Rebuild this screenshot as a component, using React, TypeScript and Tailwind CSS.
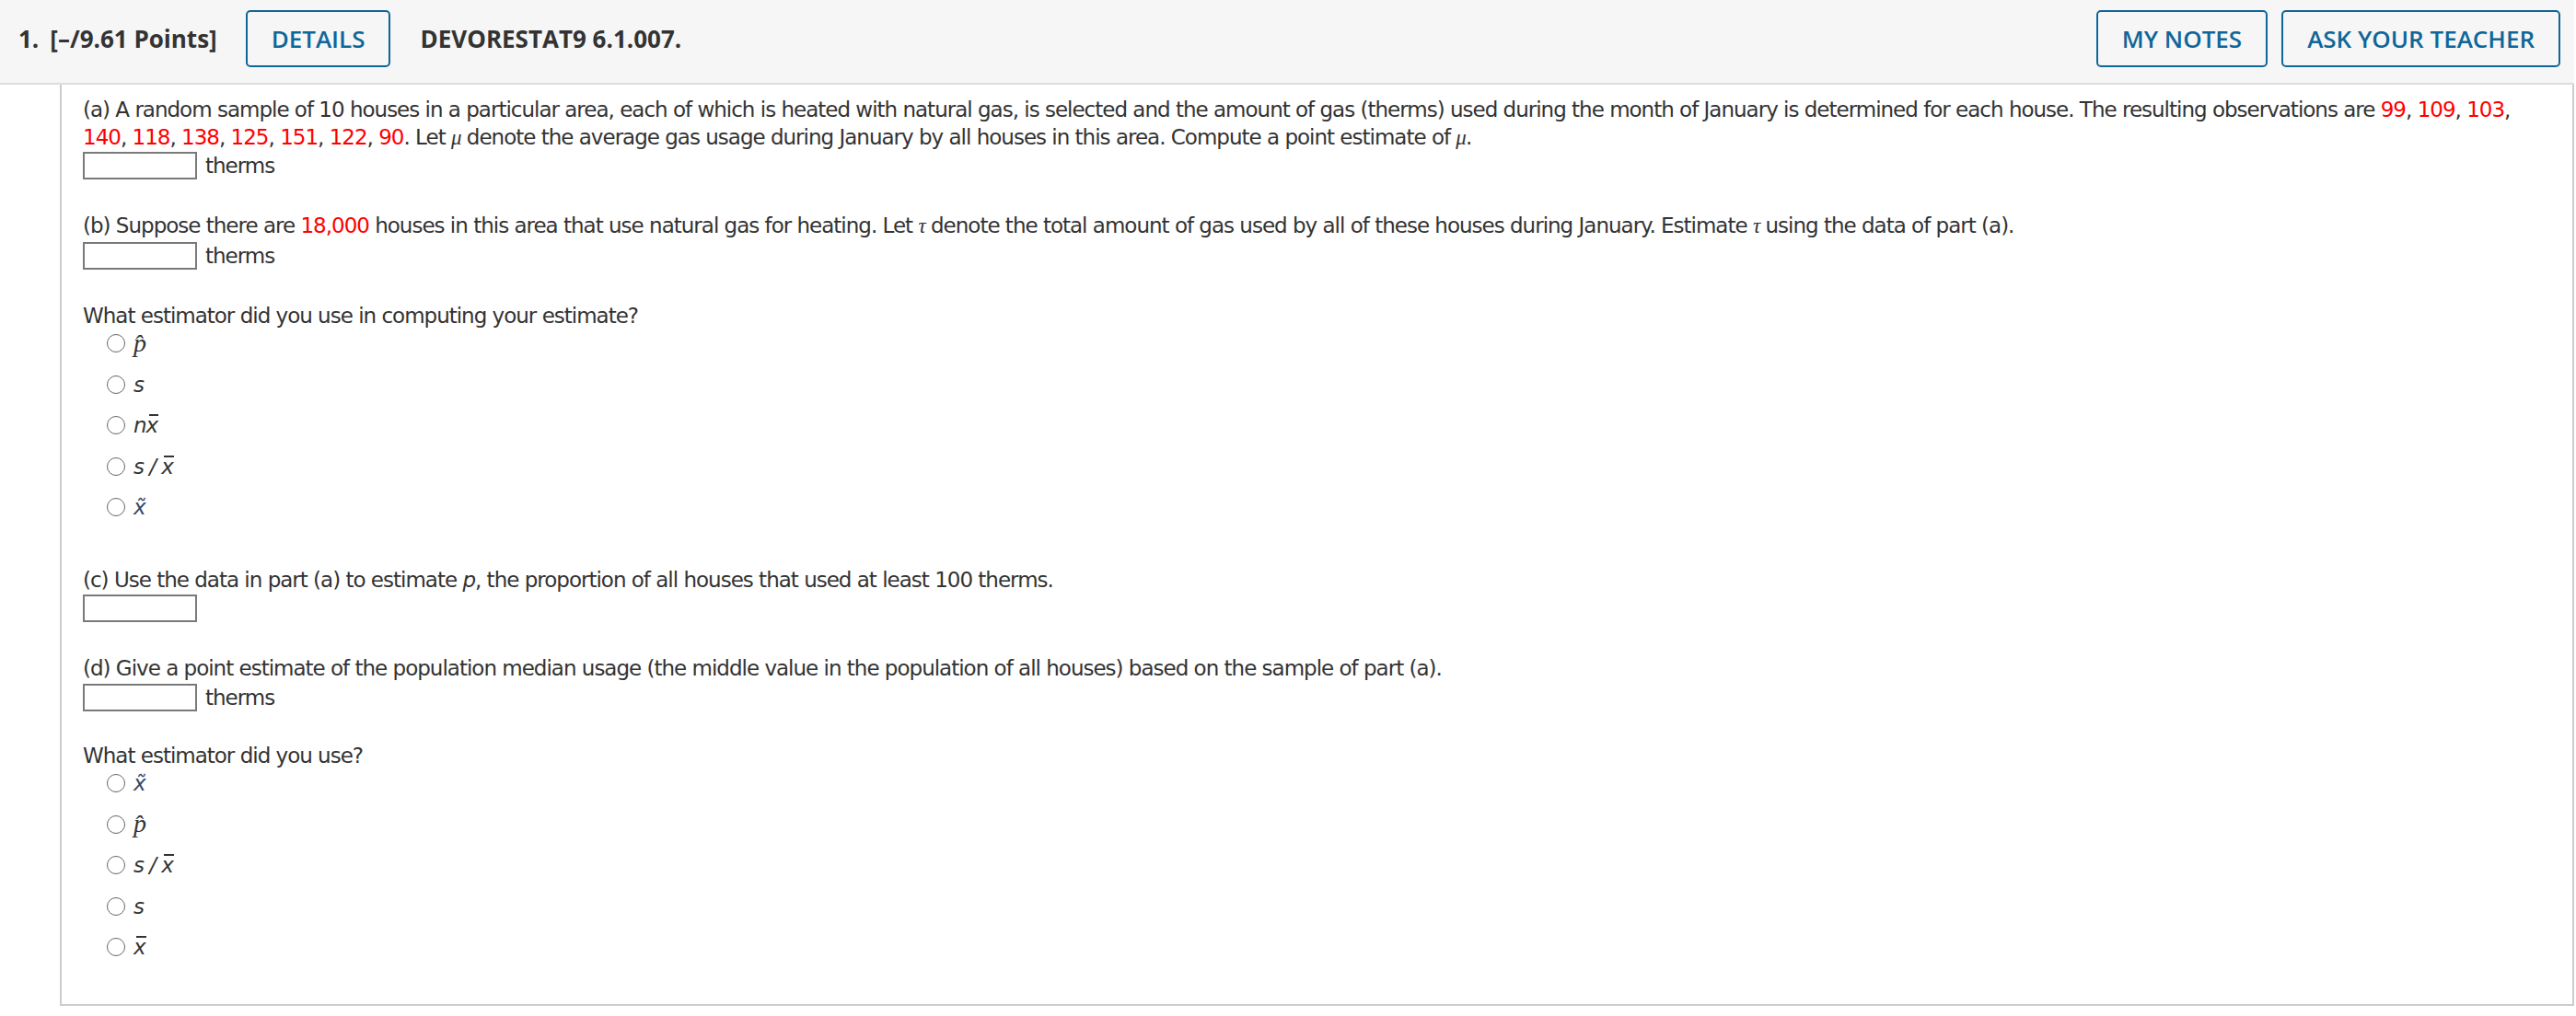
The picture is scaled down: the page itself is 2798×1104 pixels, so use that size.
import type { ReactNode } from 'react'

function Red({ children }: { children: ReactNode }) {
  return <span className="text-[#ff0000]">{children}</span>
}

function Btn({ children }: { children: ReactNode }) {
  return (
    <button className="flex h-[62px] items-center rounded-[5px] border-2 border-[#0f6699] bg-[#f6f6f6] px-[26px] text-[26px] font-semibold text-[#0f6699]">
      {children}
    </button>
  )
}

function AnswerBox({ unit }: { unit?: string }) {
  return (
    <div className="flex h-[30px] items-center">
      <span className="block h-[30px] w-[124px] shrink-0 border-2 border-[#7a7a7a] bg-white" />
      {unit && <span className="ml-[9px]">{unit}</span>}
    </div>
  )
}

// x with a bar drawn over it
function Bar({ children }: { children: ReactNode }) {
  return (
    <span className="relative inline-block">
      {children}
      <span className="absolute left-[3px] right-[-1px] top-[3px] h-[2px] bg-[#333]" />
    </span>
  )
}

const PHat = () => (
  <span className="text-[28px] italic leading-[30px] [font-family:'Liberation_Serif',serif]">{'p\u0302'}</span>
)
const XTilde = () => <span className="italic text-[#2f4868]">{'x\u0303'}</span>
const S = () => <span className="italic">s</span>
const SOverX = () => (
  <span className="italic">
    s / <Bar>x</Bar>
  </span>
)
const XBar = () => (
  <span className="italic">
    <Bar>x</Bar>
  </span>
)
const NXBar = () => (
  <span className="italic">
    n<Bar>x</Bar>
  </span>
)

function Option({ children }: { children: ReactNode }) {
  return (
    <div className="flex h-[30px] items-center">
      <span className="ml-[26px] block h-[20px] w-[20px] shrink-0 rounded-full border-[1.5px] border-[#666666] bg-white" />
      <span className="ml-[9px] leading-[30px]">{children}</span>
    </div>
  )
}

function Options({ items }: { items: ReactNode[] }) {
  return (
    <div className="flex flex-col gap-[14.5px]">
      {items.map((item, i) => (
        <Option key={i}>{item}</Option>
      ))}
    </div>
  )
}

const Mu = () => <span className="italic [font-family:'Liberation_Serif',serif]">μ</span>
const Tau = () => <span className="italic [font-family:'Liberation_Serif',serif]">τ</span>

export default function App() {
  return (
    <div className="w-[2796px] bg-white">
      {/* question header */}
      <div className="h-[92px] border-b-2 border-[#dddddd] bg-[#f6f6f6] pt-[11px] [font-family:'Open_Sans',sans-serif]">
        <div className="flex h-[62px] items-center pl-[20px] pr-[15px]">
          <span className="text-[26px] font-bold text-[#333]">1.</span>
          <span className="ml-[12px] text-[26px] font-bold text-[#333]">[–/9.61 Points]</span>
          <div className="ml-[31px]">
            <Btn>DETAILS</Btn>
          </div>
          <span className="ml-[32px] text-[26px] font-bold text-[#333]">DEVORESTAT9 6.1.007.</span>
          <div className="ml-auto flex gap-[15px]">
            <Btn>MY NOTES</Btn>
            <Btn>ASK YOUR TEACHER</Btn>
          </div>
        </div>
      </div>

      {/* question body */}
      <div className="ml-[65px] border-x-2 border-b-2 border-[#cccccc] pb-[47px] pl-[23px] pr-[12px] pt-[12px] text-[23px] leading-[30px] tracking-[-1px] text-[#333] [font-family:'DejaVu_Sans',Verdana,sans-serif]">
        <p>
          (a) A random sample of 10 houses in a particular area, each of which is heated with natural gas, is
          selected and the amount of gas (therms) used during the month of January is determined for each house.
          The resulting observations are <Red>99</Red>, <Red>109</Red>, <Red>103</Red>,
          <br />
          <Red>140</Red>, <Red>118</Red>, <Red>138</Red>, <Red>125</Red>, <Red>151</Red>, <Red>122</Red>,{' '}
          <Red>90</Red>. Let <Mu /> denote the average gas usage during January by all houses in this area. Compute a
          point estimate of <Mu />.
        </p>
        <AnswerBox unit="therms" />

        <p className="mt-[35px]">
          (b) Suppose there are <Red>18,000</Red> houses in this area that use natural gas for heating. Let <Tau />{' '}
          denote the total amount of gas used by all of these houses during January. Estimate <Tau /> using the data
          of part (a).
        </p>
        <div className="mt-[2px]">
          <AnswerBox unit="therms" />
        </div>

        <p className="mt-[35px]">What estimator did you use in computing your estimate?</p>
        <Options items={[<PHat />, <S />, <NXBar />, <SOverX />, <XTilde />]} />

        <p className="mt-[49px]">
          (c) Use the data in part (a) to estimate <span className="italic">p</span>, the proportion of all houses that
          used at least 100 therms.
        </p>
        <div className="mt-[1px]">
          <AnswerBox />
        </div>

        <p className="mt-[35px]">
          (d) Give a point estimate of the population median usage (the middle value in the population of all houses)
          based on the sample of part (a).
        </p>
        <div className="mt-[2px]">
          <AnswerBox unit="therms" />
        </div>

        <p className="mt-[33px]">What estimator did you use?</p>
        <Options items={[<XTilde />, <PHat />, <SOverX />, <S />, <XBar />]} />
      </div>
    </div>
  )
}
